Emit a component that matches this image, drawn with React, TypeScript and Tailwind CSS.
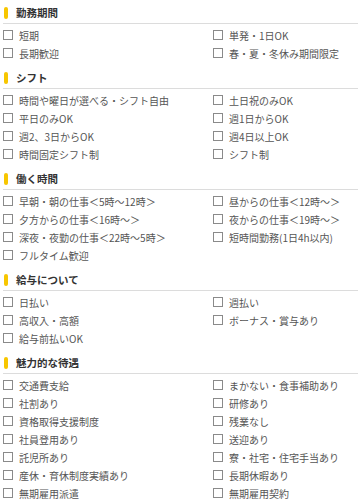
const sections: { title: string; items: string[] }[] = [
  { title: '勤務期間', items: ['短期', '単発・1日OK', '長期歓迎', '春・夏・冬休み期間限定'] },
  {
    title: 'シフト',
    items: [
      '時間や曜日が選べる・シフト自由',
      '土日祝のみOK',
      '平日のみOK',
      '週1日からOK',
      '週2、3日からOK',
      '週4日以上OK',
      '時間固定シフト制',
      'シフト制',
    ],
  },
  {
    title: '働く時間',
    items: [
      '早朝・朝の仕事＜5時～12時＞',
      '昼からの仕事＜12時～＞',
      '夕方からの仕事＜16時～＞',
      '夜からの仕事＜19時～＞',
      '深夜・夜勤の仕事＜22時～5時＞',
      '短時間勤務(1日4h以内)',
      'フルタイム歓迎',
    ],
  },
  { title: '給与について', items: ['日払い', '週払い', '高収入・高額', 'ボーナス・賞与あり', '給与前払いOK'] },
  {
    title: '魅力的な待遇',
    items: [
      '交通費支給',
      'まかない・食事補助あり',
      '社割あり',
      '研修あり',
      '資格取得支援制度',
      '残業なし',
      '社員登用あり',
      '送迎あり',
      '託児所あり',
      '寮・社宅・住宅手当あり',
      '産休・育休制度実績あり',
      '長期休暇あり',
      '無期雇用派遣',
      '無期雇用契約',
    ],
  },
];

function Check({ label }: { label: string }) {
  return (
    <label className="flex h-[18px] items-center gap-[6px] whitespace-nowrap text-[10px] text-[#555]">
      <span className="h-[10px] w-[10px] shrink-0 border border-[#8a8a8a] bg-white" />
      {label}
    </label>
  );
}

export default function App() {
  return (
    <div className="w-[358px] bg-white pt-[2px] font-['Noto_Sans_CJK_JP','Noto_Sans',sans-serif]">
      {sections.map((s, i) => (
        <section key={s.title} className={i > 0 ? 'mt-[5px]' : ''}>
          <div className="ml-[3px] flex h-[22px] items-center gap-[8px] border-b border-[#dcdcdc] pl-[1px]">
            <span className="h-[12px] w-[4px] rounded-full bg-[#f7c600]" />
            <h3 className="text-[10.5px] font-bold text-[#333]">{s.title}</h3>
          </div>
          <div className="grid grid-cols-[210px_1fr] pl-[3px] pt-[2px]">
            {s.items.map((it) => (
              <Check key={it} label={it} />
            ))}
          </div>
        </section>
      ))}
    </div>
  );
}
